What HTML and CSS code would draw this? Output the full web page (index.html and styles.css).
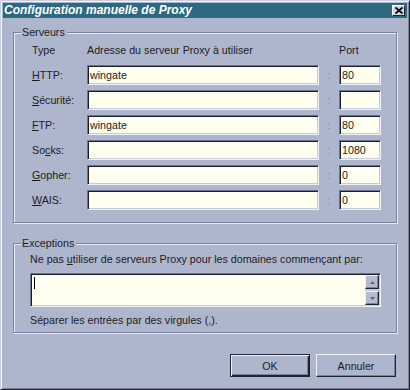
FILE: index.html
```html
<!DOCTYPE html>
<html lang="fr">
<head>
<meta charset="utf-8">
<title>Configuration manuelle de Proxy</title>
<link rel="stylesheet" href="styles.css">
</head>
<body>
<div class="window">
  <div class="titlebar">
    <span class="title">Configuration manuelle de Proxy</span>
    <span class="close">
      <svg width="8" height="7" viewBox="0 0 8 7"><path d="M0.5 0.5 L7.5 6.5 M7.5 0.5 L0.5 6.5" stroke="#000" stroke-width="1.8"/></svg>
    </span>
  </div>
  <div class="body">
    <div class="group servers">
      <span class="legend">Serveurs</span>
      <div class="grid">
        <span class="head">Type</span>
        <span class="head">Adresse du serveur Proxy à utiliser</span>
        <span></span>
        <span class="head">Port</span>

        <span class="label"><span class="u">H</span>TTP:</span>
        <input class="field" value="wingate">
        <span class="colon">:</span>
        <input class="field" value="80">

        <span class="label"><span class="u">S</span>écurité:</span>
        <input class="field" value="">
        <span class="colon">:</span>
        <input class="field" value="">

        <span class="label"><span class="u">F</span>TP:</span>
        <input class="field" value="wingate">
        <span class="colon">:</span>
        <input class="field" value="80">

        <span class="label">So<span class="u">c</span>ks:</span>
        <input class="field" value="">
        <span class="colon">:</span>
        <input class="field" value="1080">

        <span class="label"><span class="u">G</span>opher:</span>
        <input class="field" value="">
        <span class="colon">:</span>
        <input class="field" value="0">

        <span class="label"><span class="u">W</span>AIS:</span>
        <input class="field" value="">
        <span class="colon">:</span>
        <input class="field" value="0">
      </div>
    </div>

    <div class="group exceptions">
      <span class="legend">Exceptions</span>
      <div class="line">Ne pas <span class="u">u</span>tiliser de serveurs Proxy pour les domaines commençant par:</div>
      <div class="textarea">
        <div class="text-area-inner"><span class="caret"></span></div>
        <div class="scrollbar">
          <span class="sbtn"><svg width="5" height="3" viewBox="0 0 5 3"><path d="M2.5 0 L5 3 L0 3 Z" fill="#5c6480"/></svg></span>
          <span class="track"></span>
          <span class="sbtn"><svg width="5" height="3" viewBox="0 0 5 3"><path d="M0 0 L5 0 L2.5 3 Z" fill="#5c6480"/></svg></span>
        </div>
      </div>
      <div class="line note">Séparer les entrées par des virgules (,).</div>
    </div>

    <div class="buttons">
      <button class="btn default">OK</button>
      <button class="btn">Annuler</button>
    </div>
  </div>
</div>
</body>
</html>
```
FILE: styles.css
```css
html, body {
  margin: 0;
  padding: 0;
  background: #aeb6ce;
}
.window {
  width: 410px;
  height: 390px;
  box-sizing: border-box;
  border: 1px solid;
  border-color: #c9cfdf #1e2430 #1e2430 #c9cfdf;
  box-shadow: inset 1px 1px 0 #f2f4fa, inset -1px -1px 0 #7a82a0;
  padding: 2px;
  background: #aeb6ce;
  font-family: "Liberation Sans", Arial, sans-serif;
  font-size: 10.7px;
  line-height: 13px;
  color: #1c1c1c;
  display: flex;
  flex-direction: column;
}
.titlebar {
  height: 15px;
  background: #2d6a80;
  display: flex;
  align-items: center;
  justify-content: space-between;
  padding: 0 2px 0 1px;
}
.title {
  color: #ffffff;
  font-weight: bold;
  font-style: italic;
  font-size: 12px;
  line-height: 15px;
}
.close {
  width: 13px;
  height: 11px;
  box-sizing: border-box;
  background: #d2d6e2;
  border: 1px solid;
  border-color: #ffffff #1e2430 #1e2430 #ffffff;
  display: flex;
  align-items: center;
  justify-content: center;
}
.body {
  flex: 1;
  display: flex;
  flex-direction: column;
  padding: 0 10px 0 10px;
}
.group {
  position: relative;
  border: 1px solid #7a82a0;
  box-shadow: 1px 1px 0 #e6eaf4, inset 1px 1px 0 #e6eaf4;
  box-sizing: border-box;
  width: 384px;
}
.legend {
  position: absolute;
  left: 7px;
  top: -7px;
  padding: 0 2px 0 1px;
  background: #aeb6ce;
  line-height: 13px;
}
.u {
  text-decoration: underline;
}
.servers {
  margin-top: 14px;
  height: 191px;
  padding: 11px 0 0 18px;
}
.grid {
  display: grid;
  grid-template-columns: 55px 232px 20px 42px;
  grid-template-rows: 16px repeat(6, 20px);
  row-gap: 5px;
  align-items: center;
}
.head {
  align-self: start;
}
.field {
  box-sizing: border-box;
  height: 20px;
  width: 100%;
  margin: 0;
  padding: 0 2px;
  border: 1px solid;
  border-color: #6c7492 #eef1f8 #eef1f8 #6c7492;
  box-shadow: inset 1px 1px 0 #1a1e2a, inset -1px -1px 0 #c6ccdc;
  background: #fffff0;
  font-family: "Liberation Sans", Arial, sans-serif;
  font-size: 10.7px;
  color: #1c1c1c;
  outline: none;
}
.colon {
  text-align: center;
  color: #8088a4;
}
.exceptions {
  margin-top: 20px;
  height: 90px;
  padding: 9px 14px 0 16px;
  display: flex;
  flex-direction: column;
}
.line {
  height: 13px;
  white-space: nowrap;
}
.textarea {
  margin-top: 7px;
  height: 34px;
  width: 351px;
  box-sizing: border-box;
  border: 1px solid;
  border-color: #6c7492 #eef1f8 #eef1f8 #6c7492;
  box-shadow: inset 1px 1px 0 #1a1e2a, inset -1px -1px 0 #c6ccdc;
  background: #fffff0;
  display: flex;
  padding: 1px;
}
.text-area-inner {
  flex: 1;
  padding: 2px 0 0 2px;
}
.caret {
  display: block;
  width: 1px;
  height: 12px;
  background: #000;
}
.scrollbar {
  width: 14px;
  display: flex;
  flex-direction: column;
  background: #c4cadb;
}
.sbtn {
  height: 14px;
  box-sizing: border-box;
  background: #b4bcd2;
  border: 1px solid;
  border-color: #eef1f8 #1e2430 #1e2430 #eef1f8;
  box-shadow: inset -1px -1px 0 #7a82a0;
  display: flex;
  align-items: center;
  justify-content: center;
}
.track {
  flex: 1;
}
.note {
  margin-top: 7px;
}
.buttons {
  margin-top: 21px;
  display: flex;
  justify-content: flex-end;
  gap: 6px;
  padding-right: 1px;
}
.btn {
  width: 80px;
  height: 23px;
  box-sizing: border-box;
  margin: 0;
  padding: 0;
  background: #aeb6ce;
  border: 1px solid;
  border-color: #eef1f8 #1e2430 #1e2430 #eef1f8;
  box-shadow: inset -1px -1px 0 #7a82a0;
  font-family: "Liberation Sans", Arial, sans-serif;
  font-size: 10.7px;
  color: #1c1c1c;
}
.btn.default {
  border: 1px solid #1e2430;
  box-shadow: inset 1px 1px 0 #eef1f8, inset -1px -1px 0 #1e2430, inset -2px -2px 0 #7a82a0;
}
```
